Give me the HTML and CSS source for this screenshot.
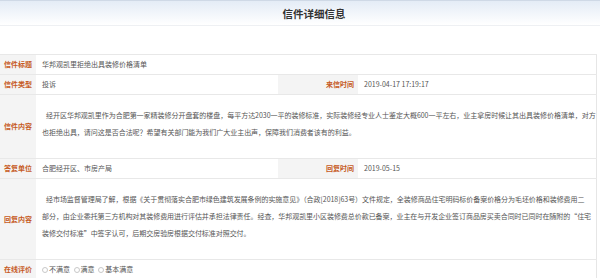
FILE: index.html
```html
<!DOCTYPE html>
<html lang="zh-CN">
<head>
  <meta charset="UTF-8" />
  <title>信件详细信息</title>
  <link rel="stylesheet" href="styles.css">
</head>
<body>

  <div class="page-head">
    <h2>信件详细信息</h2>
  </div>

  <table class="letter">
    <colgroup>
      <col class="col-label" />
      <col class="col-value" />
      <col class="col-label2" />
      <col />
    </colgroup>
    <tr>
      <th>信件标题</th>
      <td colspan="3">华邦观凯里拒绝出具装修价格清单</td>
    </tr>
    <tr>
      <th>信件类型</th>
      <td>投诉</td>
      <th class="right">来信时间</th>
      <td>2019-04-17 17:19:17</td>
    </tr>
    <tr class="long">
      <th>信件内容</th>
      <td colspan="3">
        <p>经开区华邦观凯里作为合肥第一家精装修分开盘套的楼盘，每平方达2030一平的装修标准，实际装修经专业人士鉴定大概600一平左右，业主拿房时候让其出具装修价格清单，对方也拒绝出具，请问这是否合法呢？希望有关部门能为我们广大业主出声，保障我们消费者该有的利益。</p>
      </td>
    </tr>
    <tr>
      <th>答复单位</th>
      <td>合肥经开区、市房产局</td>
      <th class="right">回复时间</th>
      <td>2019-05-15</td>
    </tr>
    <tr class="long">
      <th>回复内容</th>
      <td colspan="3">
        <p class="reply">经市场监督管理局了解，根据《关于贯彻落实合肥市绿色建筑发展条例的实施意见》（合政[2018]63号）文件规定，全装修商品住宅明码标价备案价格分为毛坯价格和装修费用二<br>部分，由企业委托第三方机构对其装修费用进行评估并承担法律责任。经查，华邦观凯里小区装修费总价款已备案，业主在与开发企业签订商品房买卖合同时已同时在随附的“住宅<br>装修交付标准”中签字认可，后期交房验房根据交付标准对照交付。</p>
      </td>
    </tr>
    <tr>
      <th>在线评价</th>
      <td colspan="3">
        <label class="radio"><span class="dot"></span>不满意</label>
        <label class="radio"><span class="dot"></span>满意</label>
        <label class="radio"><span class="dot"></span>基本满意</label>
      </td>
    </tr>
  </table>

</body>
</html>
```

FILE: styles.css
```css
body {
  margin: 0;
  font-family: "Noto Sans CJK SC", "Noto Sans", sans-serif;
  font-size: 7px;
  color: #555;
  background: #fff;
}
.page-head {
  height: 24px;
  border-top: 1px solid #cfd9e6;
  border-bottom: 1px solid #eef0f3;
  background: linear-gradient(#e4ecf6, #ffffff);
  padding-left: 28px;
  text-align: center;
}
.page-head h2 {
  margin: 0;
  font-size: 10.5px;
  line-height: 25px;
  color: #333;
}
.letter {
  margin-top: 28px;
  width: 597px;
  border-collapse: collapse;
  border-right: 1px solid #e6e6e6;
  table-layout: fixed;
}
.col-label {
  width: 36px;
}
.col-value {
  width: 242px;
}
.col-label2 {
  width: 80px;
}
.letter th,
.letter td {
  height: 19px;
  border-top: 1px solid #e8e8e8;
  border-bottom: 1px solid #e8e8e8;
  padding: 0 4px;
  line-height: 17px;
  text-align: left;
}
.letter th {
  background: #f4f4f4;
  color: #c65a1e;
  font-weight: bold;
  text-align: center;
  padding: 0;
}
.letter th.right {
  text-align: right;
  padding-right: 4px;
}
.letter td {
  padding-left: 6px;
  padding-right: 0;
}
.long td {
  padding-top: 12px;
  padding-bottom: 17px;
}
.long p {
  margin: 0;
  text-indent: 4px;
  letter-spacing: -0.03px;
}
.long p.reply {
  letter-spacing: -0.05px;
}
.radio {
  margin-right: 2px;
}
.dot {
  display: inline-block;
  width: 4px;
  height: 4px;
  border: 1px solid #c8c8c8;
  border-radius: 50%;
  margin-right: 1px;
  vertical-align: -1px;
}
```
